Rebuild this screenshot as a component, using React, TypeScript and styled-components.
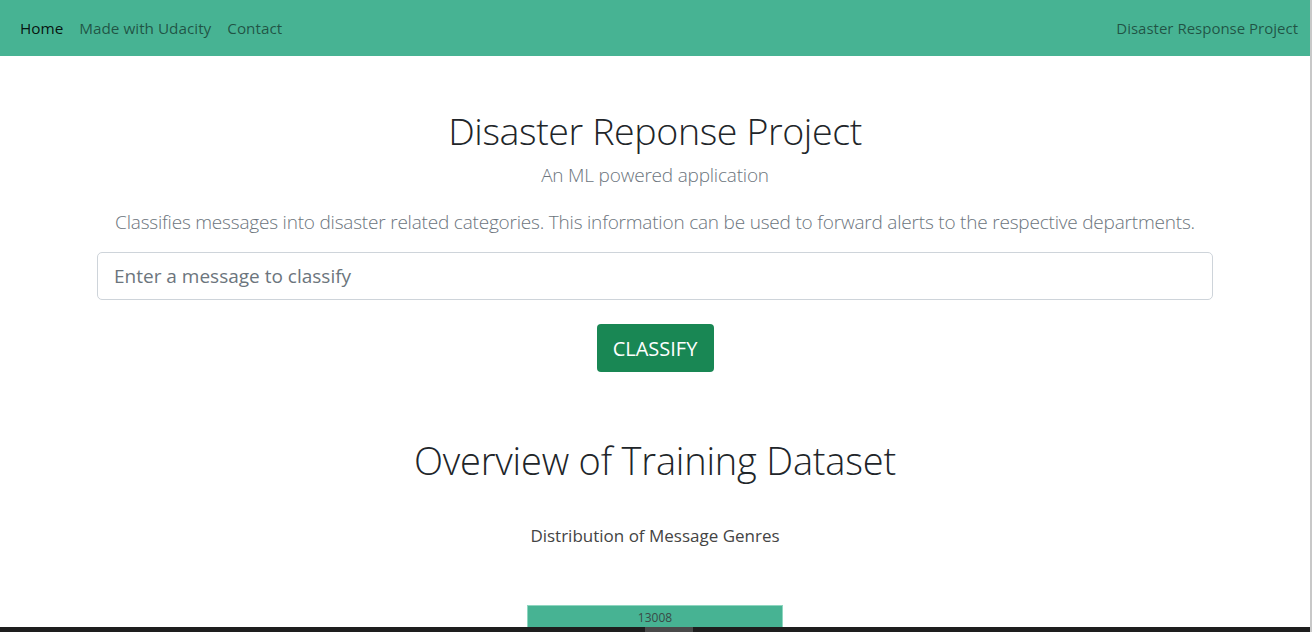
import React from "react";
import styled, { createGlobalStyle } from "styled-components";

const GlobalStyle = createGlobalStyle`
  html, body {
    margin: 0;
    padding: 0;
    background: #fff;
    font-family: "Open Sans", "Noto Sans", sans-serif;
    overflow: hidden;
  }
  * { box-sizing: border-box; }
`;

const Page = styled.div`
  width: 1312px;
  height: 632px;
  position: relative;
  overflow: hidden;
  border-right: 2px solid #c8c8c8;
`;

const Navbar = styled.nav`
  height: 56px;
  background-color: #47b393;
  display: flex;
  align-items: center;
  justify-content: space-between;
  padding: 0 12px;
`;

const NavLinks = styled.div`
  display: flex;
  align-items: center;
`;

const NavLink = styled.a<{ $active?: boolean }>`
  font-size: 15.3px;
  padding: 0 8px;
  color: ${(p) => (p.$active ? "rgba(0,0,0,0.9)" : "rgba(0,0,0,0.55)")};
  text-decoration: none;
`;

const Brand = styled.span`
  font-size: 15px;
  color: rgba(0, 0, 0, 0.55);
`;

const Container = styled.div`
  width: 1116px;
  margin: 0 auto;
  display: flex;
  flex-direction: column;
  align-items: center;
`;

const Title = styled.h1`
  font-size: 37.6px;
  font-weight: 300;
  color: #212529;
  margin: 52px 0 0 0;
  line-height: 1.2;
  letter-spacing: -0.4px;
`;

const Lead = styled.p<{ $top: number }>`
  font-size: 19px;
  font-weight: 300;
  color: #6c757d;
  margin: ${(p) => p.$top}px 0 0 0;
  line-height: 1.5;
  letter-spacing: -0.2px;
`;

const Input = styled.input`
  width: 100%;
  height: 48px;
  margin-top: 16px;
  border: 1px solid #ced4da;
  border-radius: 5px;
  padding: 0 16px;
  font-family: "Open Sans", "Noto Sans", sans-serif;
  font-size: 19px;
  color: #495057;
  outline: none;

  &::placeholder {
    color: #6c757d;
  }
`;

const Button = styled.button`
  margin-top: 24px;
  height: 48px;
  width: 117px;
  background-color: #198754;
  border: none;
  border-radius: 4px;
  color: #fff;
  font-family: "Open Sans", "Noto Sans", sans-serif;
  font-size: 20px;
`;

const Section = styled.h1`
  font-size: 38px;
  font-weight: 300;
  color: #212529;
  margin: 66px 0 0 0;
  line-height: 1.2;
  letter-spacing: -0.2px;
`;

const ChartTitle = styled.div`
  margin-top: 40px;
  font-size: 17px;
  color: #444;
`;

const Chart = styled.div`
  margin-top: 58px;
  width: 256px;
  height: 40px;
  background: #47b393;
  border: 1px solid #8fd6c0;
  display: flex;
  justify-content: center;
  padding-top: 3px;
  font-size: 12px;
  color: #3a4a46;
`;

const HScroll = styled.div`
  position: absolute;
  left: 0;
  bottom: 0;
  width: 1312px;
  height: 5px;
  background: #1e1e1e;
  display: flex;
`;

const Thumb = styled.div`
  margin-left: 645px;
  width: 48px;
  background: #4a4a4a;
`;

export default function App() {
  return (
    <Page>
      <GlobalStyle />
      <Navbar>
        <NavLinks>
          <NavLink $active>Home</NavLink>
          <NavLink>Made with Udacity</NavLink>
          <NavLink>Contact</NavLink>
        </NavLinks>
        <Brand>Disaster Response Project</Brand>
      </Navbar>
      <Container>
        <Title>Disaster Reponse Project</Title>
        <Lead $top={8}>An ML powered application</Lead>
        <Lead $top={18}>
          Classifies messages into disaster related categories. This information can be used to forward alerts to the respective departments.
        </Lead>
        <Input placeholder="Enter a message to classify" />
        <Button>CLASSIFY</Button>
        <Section>Overview of Training Dataset</Section>
        <ChartTitle>Distribution of Message Genres</ChartTitle>
        <Chart>13008</Chart>
      </Container>
      <HScroll>
        <Thumb />
      </HScroll>
    </Page>
  );
}
